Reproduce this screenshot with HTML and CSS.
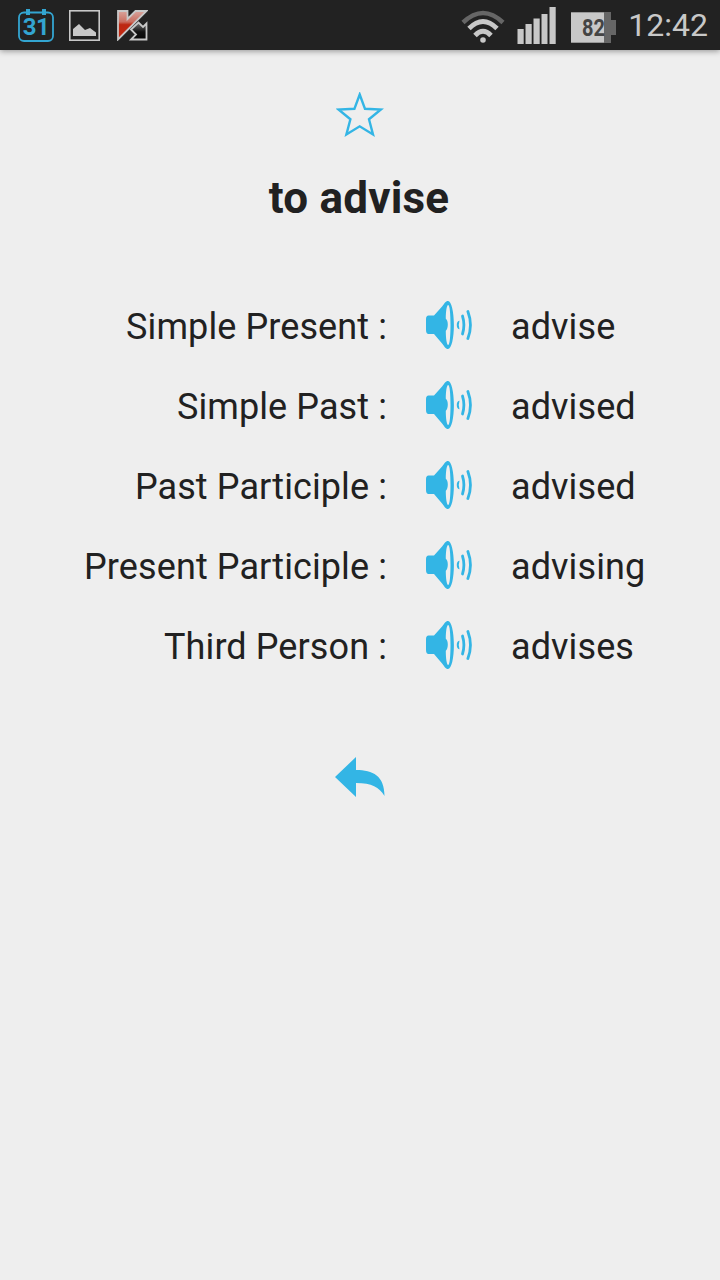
FILE: index.html
```html
<!DOCTYPE html>
<html lang="en">
<head>
    <meta charset="UTF-8">
    <meta name="viewport" content="width=device-width, initial-scale=1.0">
    <link rel="stylesheet" href="styles.css">
    <title>to advise</title>
</head>
<body>

    <!-- shared speaker icon -->
    <svg class="symbols">
        <symbol id="speaker" viewBox="0 0 48 50">
            <path fill="#33b5e5" fill-rule="evenodd" d="M3.500 15.500H9L17.500 6C19.500 3.500 20.500 1 23 1C26.500 1 28.900 12 28.900 25C28.900 38 26.500 49 23 49C20.500 49 19.500 46.500 17.500 44L9 34H3.500C2 34 1 32.500 1 30V19C1 17 2 15.500 3.500 15.500ZM20.800 18.800C23.500 20.500 23.500 29 20.800 30.800C20.800 38 21.700 45 23.200 45C24.800 45 25.500 35.500 25.500 25C25.500 14.500 24.800 5 23.200 5C21.700 5 20.800 12 20.800 18.800Z"/>
            <path fill="#33b5e5" d="M34.500 20.800Q33 25 34.500 29.200C32.500 29.500 31.800 27 31.800 25C31.800 23 32.500 20.500 34.500 20.800Z"/>
            <path class="wave" d="M37.500 16Q40.300 25 37.500 34"/>
            <path class="wave" d="M42.900 11.500Q48 25 42.900 38.500"/>
        </symbol>
    </svg>

    <header class="status-bar">
        <div class="notifications">
            <div class="calendar">
                <svg width="36" height="33" viewBox="0 0 36 33">
                    <rect x="1" y="3.500" width="34" height="28.500" rx="5" fill="none" stroke="#33a5d1" stroke-width="1.800"/>
                    <path fill="#33a5d1" d="M8 0h4v6H8zM24 0h4v6h-4z"/>
                </svg>
                <span>31</span>
            </div>
            <svg class="picture" width="31" height="31" viewBox="0 0 31 31">
                <rect x=".8" y=".8" width="29.400" height="29.400" fill="none" stroke="#c8c8c8" stroke-width="1.600"/>
                <path fill="#c8c8c8" d="M4 26V19L10 14L16 20L21 18L27 22.500V26Z"/>
            </svg>
            <svg class="shield" width="31" height="31" viewBox="0 0 31 31">
                <defs>
                    <linearGradient id="red" x1="0" y1="0" x2="0" y2="1">
                        <stop offset="0" stop-color="#d9a49c"/>
                        <stop offset=".38" stop-color="#c96e60"/>
                        <stop offset=".48" stop-color="#bd2812"/>
                        <stop offset="1" stop-color="#c32912"/>
                    </linearGradient>
                    <linearGradient id="dark" x1="0" y1="0" x2="0" y2="1">
                        <stop offset="0" stop-color="#777"/>
                        <stop offset=".55" stop-color="#111"/>
                        <stop offset="1" stop-color="#080808"/>
                    </linearGradient>
                </defs>
                <path fill="url(#dark)" stroke="#c8c8c8" stroke-width="1.800" d="M14 19.500L21.500 12.500L26 17L29.500 13.500V29.500H14L19 24.500Z"/>
                <path fill="url(#red)" stroke="#c8c8c8" stroke-width="1.800" d="M1 1H10.500V9L18.500 1H29.500L1 29.500Z"/>
            </svg>
        </div>

        <div class="system">
            <svg class="wifi" width="44" height="34" viewBox="0 0 44 34">
                <path fill="none" stroke="#666" stroke-width="4.500" d="M2 12.500Q22-6.500 42 12.500"/>
                <path fill="none" stroke="#c8c8c8" stroke-width="4.800" d="M8 18.500Q22 4.500 36 18.500M14 25.500Q22 17 30 25.500"/>
                <circle cx="22" cy="30" r="2.800" fill="#c8c8c8"/>
            </svg>
            <svg class="signal" width="39" height="38" viewBox="0 0 39 38">
                <path fill="#c8c8c8" d="M.5 23h6.200v15H.5zM8.500 18h6.200v20H8.500zM16.500 12.500h6.200V38h-6.200zM24.500 8h6v30h-6zM32.500 1h6.200v37h-6.200z"/>
            </svg>
            <div class="battery">
                <svg width="45" height="31" viewBox="0 0 45 31">
                    <path fill="#666" d="M0 0h40v8h5v15h-5v8H0z"/>
                    <path fill="#c8c8c8" d="M0 .5h33v30H0z"/>
                </svg>
                <span>82</span>
            </div>
            <span class="clock">12:42</span>
        </div>
    </header>

    <main>
        <svg class="star" width="48" height="46" viewBox="0 0 48 46">
            <path fill="none" stroke="#33b5e5" stroke-width="2.400" d="M23.700 2.500L29 16.800L44.900 17.500L33 27.200L37 42.500L23.700 34.300L10.400 42.500L14.400 27.200L2.500 17.500L18.400 16.800Z"/>
        </svg>

        <h1>to advise</h1>

        <div class="forms">
            <span class="label">Simple Present :</span>
            <svg class="speaker"><use href="#speaker"/></svg>
            <span class="word">advise</span>

            <span class="label">Simple Past :</span>
            <svg class="speaker"><use href="#speaker"/></svg>
            <span class="word">advised</span>

            <span class="label">Past Participle :</span>
            <svg class="speaker"><use href="#speaker"/></svg>
            <span class="word">advised</span>

            <span class="label">Present Participle :</span>
            <svg class="speaker"><use href="#speaker"/></svg>
            <span class="word">advising</span>

            <span class="label">Third Person :</span>
            <svg class="speaker"><use href="#speaker"/></svg>
            <span class="word">advises</span>
        </div>

        <svg class="back" width="50" height="40" viewBox="0 0 50 40">
            <path fill="#33b5e5" d="M0 20L21 0V13C38 13 49.500 19 49.500 39C44 30 37 26 21 26V40Z"/>
        </svg>
    </main>

</body>
</html>
```

FILE: styles.css
```css
* {
    box-sizing: border-box;
}

body {
    margin: 0;
    min-height: 100vh;
    background: #eee;
    color: #212121;
    font-family: Roboto, sans-serif;
    overflow: hidden;
}

svg {
    display: block;
    flex: none;
}

.symbols {
    width: 0;
    height: 0;
    position: absolute;
}

.status-bar {
    height: 50px;
    display: flex;
    justify-content: space-between;
    padding: 0 12px 0 18px;
    background: #222;
    box-shadow: 0 1px 6px rgba(0, 0, 0, 0.4);
}

.notifications,
.system {
    display: flex;
    align-items: flex-start;
}

.calendar {
    position: relative;
    margin-top: 9px;
}

.calendar span {
    position: absolute;
    top: 4px;
    left: 0;
    width: 36px;
    text-align: center;
    color: #33a5d1;
    font-size: 24px;
    line-height: 28px;
    font-weight: bold;
    letter-spacing: -0.5px;
}

.picture {
    margin: 10px 0 0 15px;
}

.shield {
    margin: 10px 0 0 17px;
}

.wifi {
    margin-top: 10px;
}

.signal {
    margin: 6px 0 0 12px;
}

.battery {
    position: relative;
    margin: 12px 0 0 15px;
}

.battery span {
    position: absolute;
    top: 3px;
    left: 11px;
    color: #444;
    font-size: 23px;
    line-height: 28px;
    font-weight: bold;
    transform: scaleX(0.87);
    transform-origin: left;
}

.clock {
    margin-left: 12px;
    color: #c8c8c8;
    font-size: 32px;
    line-height: 51px;
}

main {
    display: flex;
    flex-direction: column;
    align-items: center;
}

.star {
    margin-top: 42px;
}

h1 {
    margin: 34px 0 0;
    padding-right: 2px;
    font-size: 44px;
    line-height: 52px;
    font-weight: bold;
    letter-spacing: 0.2px;
}

.forms {
    width: 100%;
    margin-top: 61px;
    display: grid;
    grid-template-columns: 390px 48px 1fr;
    grid-auto-rows: 80px;
    column-gap: 35px;
    align-items: center;
    font-size: 36px;
    line-height: 42px;
    letter-spacing: 0.1px;
}

.label {
    padding: 4px 3px 0 0;
    text-align: right;
    white-space: nowrap;
}

.word {
    padding: 4px 0 0 3px;
}

.speaker {
    width: 48px;
    height: 50px;
}

.wave {
    fill: none;
    stroke: #33b5e5;
    stroke-width: 2.8;
    stroke-linecap: round;
}

.back {
    margin-top: 72px;
}
```
